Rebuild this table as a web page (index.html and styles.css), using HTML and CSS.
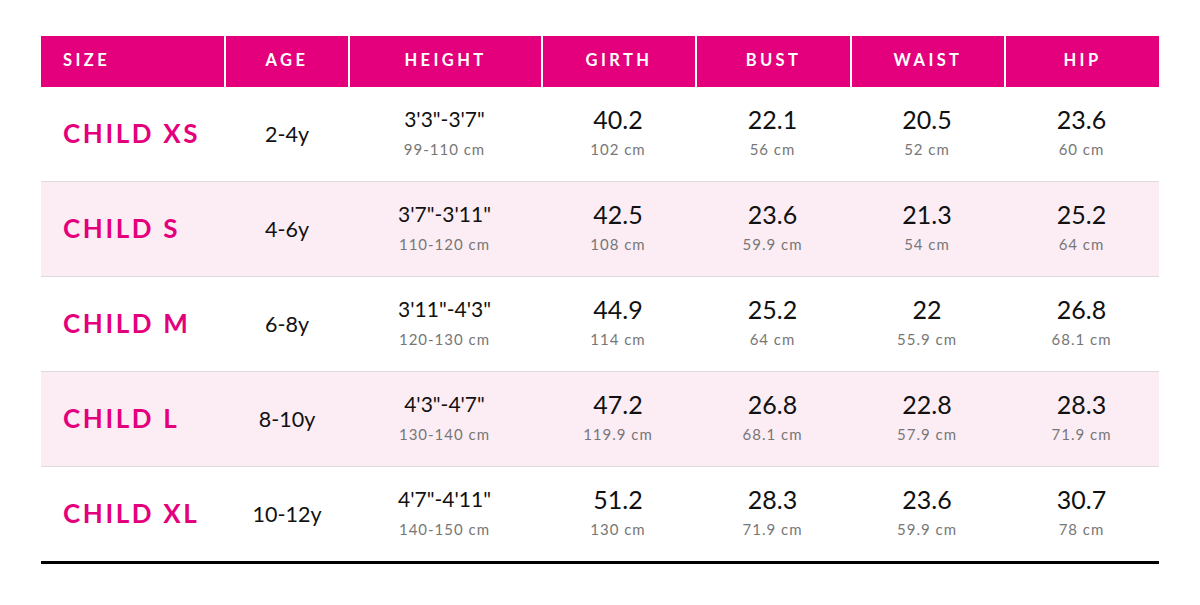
FILE: index.html
```html
<!DOCTYPE html>
<html>
<head>
<meta charset="utf-8">
<link rel="stylesheet" href="styles.css">
</head>
<body>
<div class="chart">
  <div class="row head">
    <div class="h first">SIZE</div>
    <div class="h">AGE</div>
    <div class="h">HEIGHT</div>
    <div class="h">GIRTH</div>
    <div class="h">BUST</div>
    <div class="h">WAIST</div>
    <div class="h">HIP</div>
  </div>

  <div class="row">
    <div class="c size">CHILD XS</div>
    <div class="c age">2-4y</div>
    <div class="c"><span class="hv">3'3"-3'7"</span><span class="sub">99-110 cm</span></div>
    <div class="c"><span class="v">40.2</span><span class="sub">102 cm</span></div>
    <div class="c"><span class="v">22.1</span><span class="sub">56 cm</span></div>
    <div class="c"><span class="v">20.5</span><span class="sub">52 cm</span></div>
    <div class="c"><span class="v">23.6</span><span class="sub">60 cm</span></div>
  </div>

  <div class="row alt">
    <div class="c size">CHILD S</div>
    <div class="c age">4-6y</div>
    <div class="c"><span class="hv">3'7"-3'11"</span><span class="sub">110-120 cm</span></div>
    <div class="c"><span class="v">42.5</span><span class="sub">108 cm</span></div>
    <div class="c"><span class="v">23.6</span><span class="sub">59.9 cm</span></div>
    <div class="c"><span class="v">21.3</span><span class="sub">54 cm</span></div>
    <div class="c"><span class="v">25.2</span><span class="sub">64 cm</span></div>
  </div>

  <div class="row">
    <div class="c size">CHILD M</div>
    <div class="c age">6-8y</div>
    <div class="c"><span class="hv">3'11"-4'3"</span><span class="sub">120-130 cm</span></div>
    <div class="c"><span class="v">44.9</span><span class="sub">114 cm</span></div>
    <div class="c"><span class="v">25.2</span><span class="sub">64 cm</span></div>
    <div class="c"><span class="v">22</span><span class="sub">55.9 cm</span></div>
    <div class="c"><span class="v">26.8</span><span class="sub">68.1 cm</span></div>
  </div>

  <div class="row alt">
    <div class="c size">CHILD L</div>
    <div class="c age">8-10y</div>
    <div class="c"><span class="hv">4'3"-4'7"</span><span class="sub">130-140 cm</span></div>
    <div class="c"><span class="v">47.2</span><span class="sub">119.9 cm</span></div>
    <div class="c"><span class="v">26.8</span><span class="sub">68.1 cm</span></div>
    <div class="c"><span class="v">22.8</span><span class="sub">57.9 cm</span></div>
    <div class="c"><span class="v">28.3</span><span class="sub">71.9 cm</span></div>
  </div>

  <div class="row last">
    <div class="c size">CHILD XL</div>
    <div class="c age">10-12y</div>
    <div class="c"><span class="hv">4'7"-4'11"</span><span class="sub">140-150 cm</span></div>
    <div class="c"><span class="v">51.2</span><span class="sub">130 cm</span></div>
    <div class="c"><span class="v">28.3</span><span class="sub">71.9 cm</span></div>
    <div class="c"><span class="v">23.6</span><span class="sub">59.9 cm</span></div>
    <div class="c"><span class="v">30.7</span><span class="sub">78 cm</span></div>
  </div>
</div>
</body>
</html>
```

FILE: styles.css
```css
html, body {
  margin: 0;
  padding: 0;
  background: #ffffff;
}

body {
  font-family: "Lato", "Open Sans", sans-serif;
  color: #111111;
}

.chart {
  width: 1118px;
  margin: 36px 0 0 41px;
}

.row {
  display: grid;
  grid-template-columns: 183px 124px 193px 154px 155px 154px 155px;
  height: 95px;
  border-bottom: 1px solid #dedbde;
  box-sizing: border-box;
}

.row.alt {
  background: #fcedf5;
}

.row.last {
  border-bottom: 3px solid #000000;
  height: 97px;
}

.row.head {
  height: 51px;
  background: #e4007c;
  border-bottom: none;
}

.h {
  display: flex;
  align-items: center;
  justify-content: center;
  color: #ffffff;
  font-size: 16.5px;
  font-weight: 700;
  letter-spacing: 3.4px;
  padding-bottom: 3px;
  border-left: 2px solid #ffffff;
}

.h.first {
  border-left: none;
  justify-content: flex-start;
  padding-left: 22px;
}

.c {
  display: flex;
  flex-direction: column;
  align-items: center;
  justify-content: center;
}

.c.size {
  align-items: flex-start;
  padding-left: 22px;
  color: #e4007c;
  font-weight: 700;
  font-size: 26px;
  letter-spacing: 2.6px;
  padding-bottom: 2px;
}

.c.age {
  font-size: 21.5px;
  padding-left: 2px;
}

.v {
  font-size: 25px;
  line-height: 30px;
}

.hv {
  font-size: 21px;
  line-height: 30px;
}

.sub {
  font-size: 15px;
  line-height: 30px;
  color: #777777;
  letter-spacing: 1px;
}
```
